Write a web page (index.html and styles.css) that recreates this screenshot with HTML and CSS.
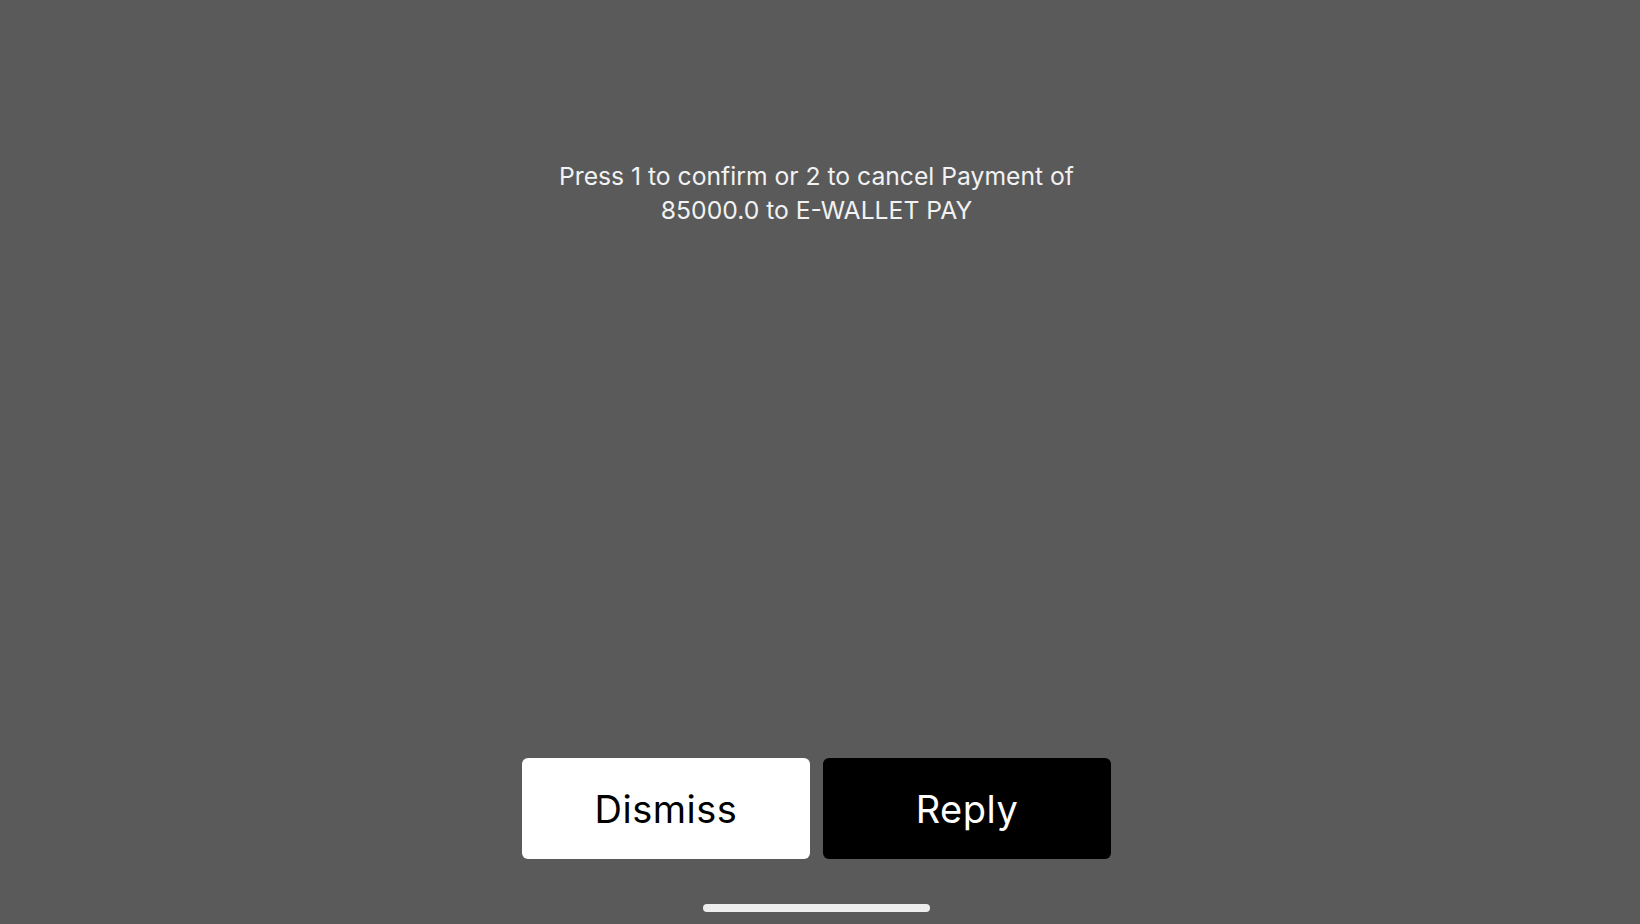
FILE: index.html
```html
<!DOCTYPE html>
<html lang="en">
<head>
  <meta charset="UTF-8">
  <meta name="viewport" content="width=device-width, initial-scale=1.0">
  <title>Payment Prompt</title>
  <link rel="stylesheet" href="styles.css">
</head>
<body>
  <div id="screen">
    <div id="message">
      Press 1 to confirm or 2 to cancel Payment of 85000.0 to E-WALLET PAY
    </div>
    <div id="actions">
      <button class="action dismiss">Dismiss</button>
      <button class="action reply">Reply</button>
    </div>
    <div id="homeBar"></div>
  </div>
</body>
</html>
```

FILE: styles.css
```css
html, body {
  margin: 0;
  padding: 0;
}
body {
  font-family: Inter, 'Noto Sans', sans-serif;
  background: #5a5a5a;
  height: 924px;
  overflow: hidden;
}
#screen {
  height: 924px;
  box-sizing: border-box;
  padding: 159px 7px 12px 0;
  display: flex;
  flex-direction: column;
  align-items: center;
}
#message {
  max-width: 540px;
  text-align: center;
  color: #f2f2f2;
  font-size: 24.7px;
  line-height: 34px;
}
#actions {
  margin-top: auto;
  display: flex;
  gap: 13px;
}
.action {
  width: 288px;
  height: 101px;
  border: none;
  border-radius: 6px;
  font-family: inherit;
  font-size: 38px;
  letter-spacing: 0.5px;
  cursor: pointer;
}
.dismiss {
  background: #fff;
  color: #000;
}
.reply {
  background: #000;
  color: #fff;
}
#homeBar {
  margin-top: 45px;
  width: 227px;
  height: 8px;
  border-radius: 4px;
  background: #eeeeee;
}
```
